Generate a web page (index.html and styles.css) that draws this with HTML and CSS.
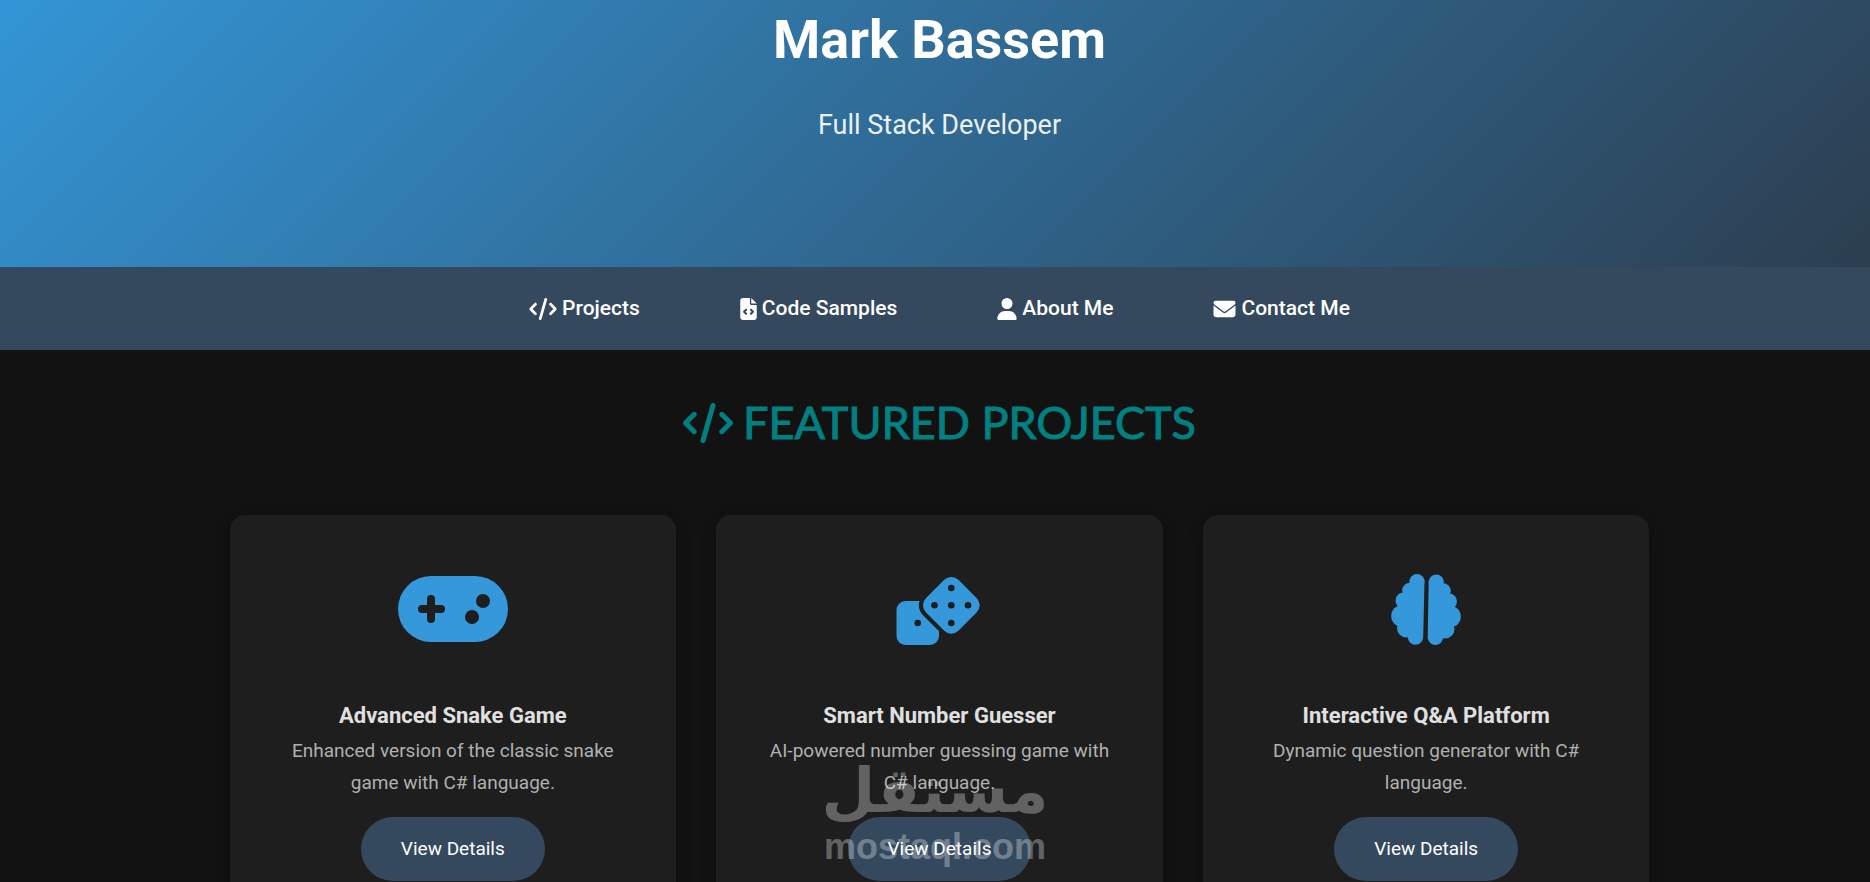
FILE: index.html
```html
<!DOCTYPE html>
<html lang="en">
<head>
<meta charset="utf-8">
<title>Mark Bassem</title>
<link rel="stylesheet" href="styles.css">
</head>
<body>
<svg class="defs" aria-hidden="true">
  <symbol id="code" viewBox="0 0 640 512"><path d="M392.800 1.200c-17-4.900-34.700 5-39.600 22l-128 448c-4.900 17 5 34.700 22 39.600s34.700-5 39.600-22l128-448c4.900-17-5-34.700-22-39.600zm80.600 120.100c-12.500 12.500-12.500 32.800 0 45.300L562.700 256l-89.400 89.400c-12.500 12.500-12.500 32.800 0 45.300s32.800 12.500 45.300 0l112-112c12.500-12.500 12.500-32.800 0-45.300l-112-112c-12.500-12.500-32.800-12.500-45.300 0zm-306.700 0c-12.500-12.500-32.800-12.500-45.300 0l-112 112c-12.500 12.500-12.500 32.800 0 45.300l112 112c12.500 12.500 32.800 12.500 45.300 0s12.500-32.800 0-45.300L77.300 256l89.400-89.400c12.500-12.500 12.500-32.800 0-45.300z"/></symbol>
</svg>
<header class="hero">
  <h1 class="hero-title">Mark Bassem</h1>
  <p class="hero-subtitle">Full Stack Developer</p>
</header>
<nav class="nav">
  <a class="nav-link" href="#projects"><svg class="nav-icon nav-icon-wide" viewBox="0 0 640 512" aria-hidden="true"><use href="#code"/></svg>Projects</a>
  <a class="nav-link" href="#samples"><svg class="nav-icon nav-icon-slim" viewBox="0 0 384 512" aria-hidden="true"><path d="M64 0C28.700 0 0 28.700 0 64V448c0 35.300 28.700 64 64 64H320c35.300 0 64-28.700 64-64V160H256c-17.700 0-32-14.300-32-32V0H64zM256 0V128H384L256 0zM153 289l-31 31 31 31c9.400 9.400 9.400 24.600 0 33.900s-24.600 9.400-33.900 0L71 337c-9.400-9.400-9.400-24.600 0-33.900l48-48c9.400-9.400 24.600-9.400 33.900 0s9.400 24.600 0 33.900zM265 255l48 48c9.400 9.400 9.400 24.600 0 33.900l-48 48c-9.400 9.400-24.600 9.400-33.900 0s-9.400-24.600 0-33.900l31-31-31-31c-9.400-9.400-9.400-24.600 0-33.900s24.600-9.400 33.900 0z"/></svg>Code Samples</a>
  <a class="nav-link" href="#about"><svg class="nav-icon" viewBox="0 0 448 512" aria-hidden="true"><path d="M224 256A128 128 0 1 0 224 0a128 128 0 1 0 0 256zm-45.700 48C79.800 304 0 383.800 0 482.300C0 498.700 13.300 512 29.700 512H418.300c16.400 0 29.700-13.300 29.700-29.700C448 383.800 368.200 304 269.700 304H178.300z"/></svg>About Me</a>
  <a class="nav-link" href="#contact"><svg class="nav-icon nav-icon-square" viewBox="0 0 512 512" aria-hidden="true"><path d="M48 64C21.500 64 0 85.500 0 112c0 15.100 7.100 29.300 19.200 38.400L236.800 313.600c11.400 8.500 27 8.500 38.400 0L492.800 150.400c12.100-9.100 19.200-23.300 19.200-38.400c0-26.500-21.500-48-48-48H48zM0 176V384c0 35.300 28.700 64 64 64H448c35.300 0 64-28.700 64-64V176L294.400 339.200c-22.800 17.100-54 17.100-76.800 0L0 176z"/></svg>Contact Me</a>
</nav>
<main class="page">
  <section class="projects" id="projects">
  <h2 class="section-title"><svg class="section-icon" viewBox="0 0 640 512" aria-hidden="true"><use href="#code"/></svg>FEATURED PROJECTS</h2>
  <div class="grid">
    <article class="card">
      <svg class="card-icon" viewBox="0 0 110 88" aria-hidden="true"><rect y="11" width="110" height="66" rx="33"/><g class="cut"><rect x="20" y="40" width="27" height="8" rx="4"/><rect x="29" y="30" width="8" height="28" rx="4"/><circle cx="85" cy="36" r="7"/><circle cx="74" cy="52" r="7"/></g></svg>
      <h3 class="card-title">Advanced Snake Game</h3>
      <p class="card-text">Enhanced version of the classic snake game with C# language.</p>
      <button class="button" type="button">View Details</button>
    </article>
    <article class="card">
      <svg class="card-icon" viewBox="0 0 110 88" aria-hidden="true"><rect x="12.500" y="36" width="42.500" height="44" rx="9"/><g transform="translate(67.300 40.300) rotate(45)"><rect class="cut" x="-27" y="-27" width="54" height="54" rx="14"/><rect x="-23" y="-23" width="46" height="46" rx="10"/></g><g class="cut"><circle cx="33.700" cy="58" r="3.300"/><circle cx="67.300" cy="23" r="3.300"/><circle cx="50.500" cy="40.300" r="3.300"/><circle cx="67.300" cy="40.300" r="3.300"/><circle cx="84" cy="40.300" r="3.300"/><circle cx="67.300" cy="58" r="3.300"/></g></svg>
      <h3 class="card-title">Smart Number Guesser</h3>
      <p class="card-text">AI-powered number guessing game with C# language.</p>
      <button class="button" type="button">View Details</button>
      <div class="watermark" aria-hidden="true"><span class="watermark-ar" lang="ar" dir="rtl">مستقل</span><span class="watermark-en">mostaql.com</span></div>
    </article>
    <article class="card">
      <svg class="card-icon" viewBox="0 0 110 88" aria-hidden="true">
        <path d="M53.500 16L52.200 72H44L33 60L30 45L38 25L45 12Z"/>
        <circle cx="46" cy="16.500" r="7.600"/><circle cx="39" cy="25.500" r="7.800"/><circle cx="32.500" cy="35.500" r="8"/><circle cx="31" cy="51" r="10.800"/><circle cx="35.500" cy="63" r="9.500"/><circle cx="44.500" cy="72" r="7.700"/>
        <path d="M57.700 16L56.700 72H66L77 60L80 45L73 25L65 12Z"/>
        <circle cx="65.300" cy="17" r="7.600"/><circle cx="72" cy="26" r="7.800"/><circle cx="78" cy="36.500" r="8"/><circle cx="79" cy="51.500" r="10.800"/><circle cx="74" cy="64" r="9.500"/><circle cx="64.400" cy="72.300" r="7.700"/>
      </svg>
      <h3 class="card-title">Interactive Q&amp;A Platform</h3>
      <p class="card-text">Dynamic question generator with C# language.</p>
      <button class="button" type="button">View Details</button>
    </article>
  </div>
  </section>
</main>
</body>
</html>
```
FILE: styles.css
```css
* { box-sizing: border-box; }
body {
  margin: 0;
  background: #121212;
  font-family: "Roboto", "Noto Sans", sans-serif;
  color: #e0e0e0;
  overflow: hidden;
}
h1, h2, h3, p { margin: 0; font-family: inherit; }
.defs { display: none; }
.hero, .nav, .page { padding-left: 9px; }
.hero {
  padding-top: 4px;
  padding-bottom: 120px;
  text-align: center;
  color: #fff;
  background: linear-gradient(135deg, #3498db, #2c3e50) bottom / 100% 350px;
}
.hero-title { font-size: 54px; line-height: 72px; font-weight: 700; }
.hero-subtitle { margin-top: 28px; font-size: 27px; line-height: 43px; opacity: 0.9; }
.nav {
  display: flex;
  justify-content: center;
  gap: 100px;
  padding-top: 24px;
  padding-bottom: 24px;
  background: #34495e;
}
.nav-link {
  display: flex;
  align-items: center;
  gap: 5px;
  color: #fff;
  font-size: 21px;
  line-height: 35px;
  font-weight: 500;
  text-decoration: none;
}
.nav-icon { width: 20px; height: 22px; fill: currentColor; }
.nav-icon-wide { width: 28px; }
.nav-icon-slim { width: 17px; }
.nav-icon-square { width: 23px; }
.projects { max-width: 1500px; margin: 0 auto; padding: 40px; }
.section-title {
  display: flex;
  justify-content: center;
  align-items: center;
  gap: 10px;
  margin-bottom: 60px;
  font-family: "Lato", sans-serif;
  font-size: 45px;
  line-height: 65px;
  font-weight: 400;
  color: #008080;
  -webkit-text-stroke: 1px #008080;
}
.section-icon { width: 50px; height: 40px; fill: currentColor; }
.grid { display: grid; grid-template-columns: repeat(3, 1fr); gap: 40px; }
.card {
  position: relative;
  display: flex;
  flex-direction: column;
  align-items: center;
  padding: 50px 40px 40px;
  border-radius: 15px;
  background: #1e1e1e;
  box-shadow: 0 5px 15px rgba(0, 0, 0, 0.3);
  text-align: center;
}
.card-icon { width: 110px; height: 88px; margin-bottom: 44px; fill: #3498db; }
.cut { fill: #1e1e1e; }
.card-title { font-size: 22px; line-height: 38px; font-weight: 700; }
.card-text { max-width: 350px; font-size: 19px; line-height: 32px; color: #b0b0b0; }
.button {
  margin-top: 18px;
  padding: 16px 40px;
  border: 0;
  border-radius: 32px;
  background: #34495e;
  color: #fff;
  font: 19px/32px "Roboto", "Noto Sans", sans-serif;
}
.watermark {
  position: absolute;
  top: 234px;
  left: 0;
  right: 9px;
  display: flex;
  flex-direction: column;
  align-items: center;
  color: #fff;
  opacity: 0.3;
}
.watermark-ar { font: bold 62px/84px "DejaVu Sans", sans-serif; }
.watermark-en { font: bold 36px/28px "Liberation Sans", sans-serif; }
```
